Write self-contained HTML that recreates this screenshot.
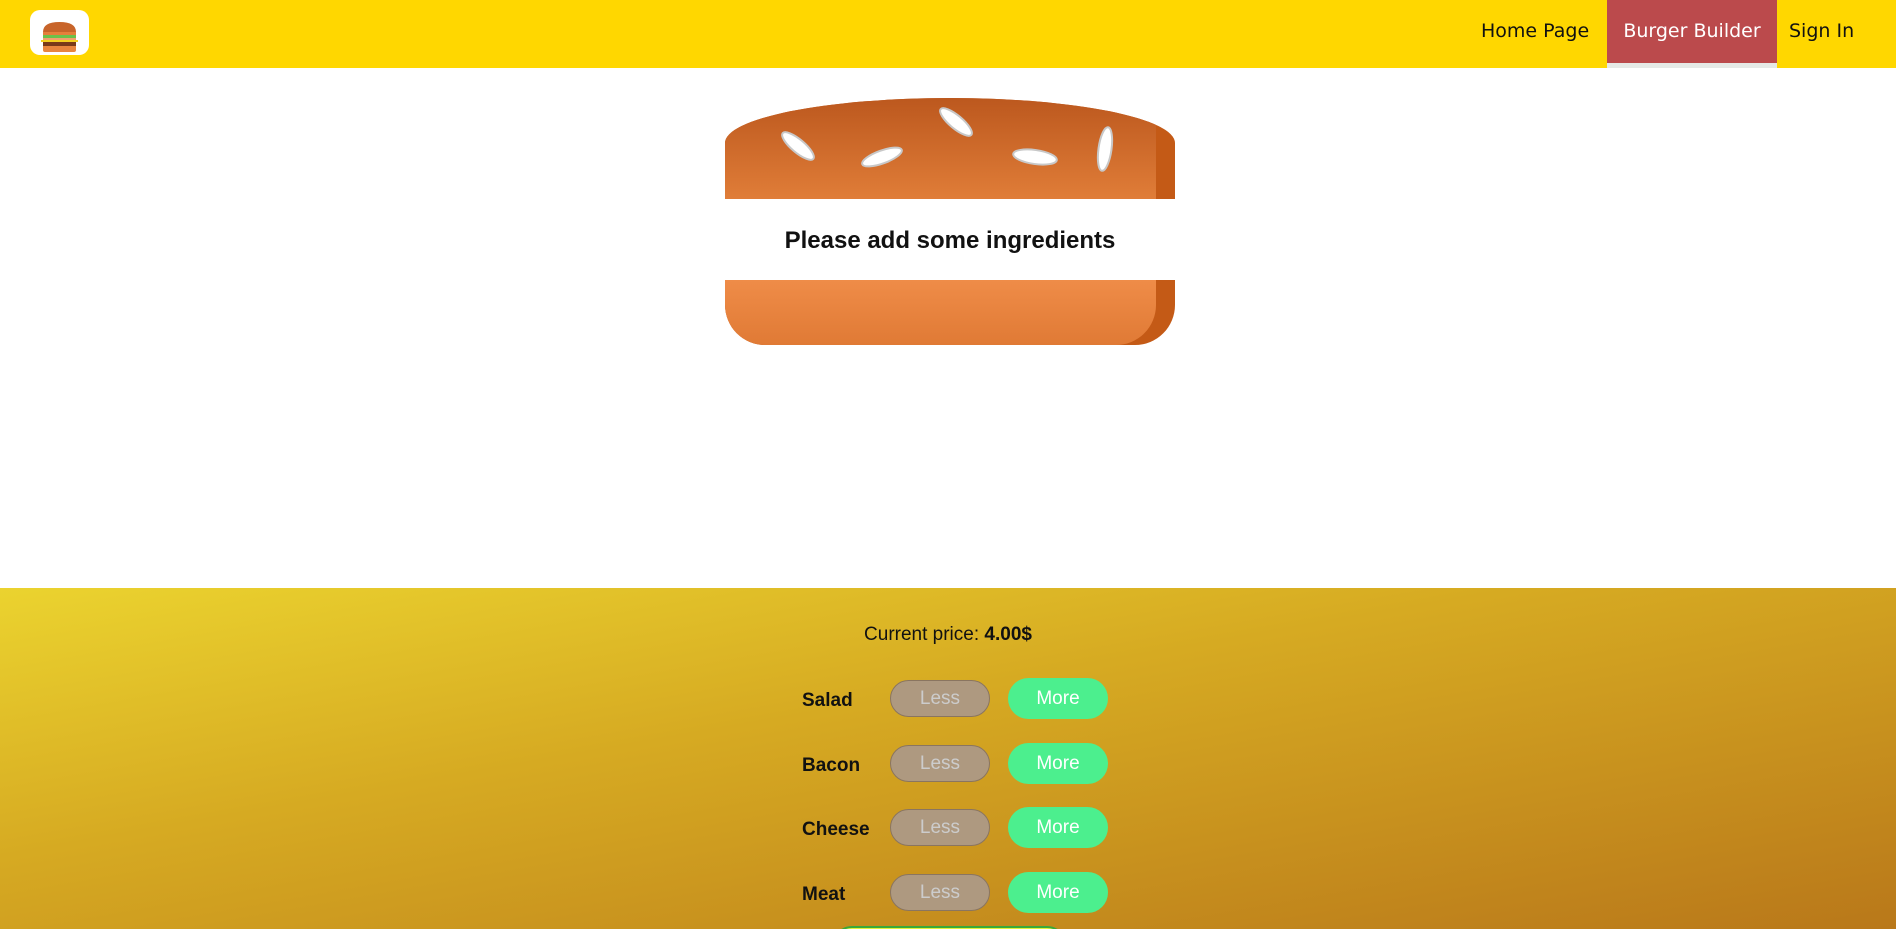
<!DOCTYPE html>
<html><head><meta charset="utf-8">
<style>
*{box-sizing:border-box;margin:0;padding:0}
html{width:1896px;height:929px;overflow:hidden}
body{width:1896px;height:929px;overflow:hidden;background:#fff;font-family:"Liberation Sans",sans-serif;position:relative}
.hdr{position:absolute;left:0;top:0;width:1896px;height:68px;background:#ffd700}
.logo{position:absolute;left:30px;top:10px;width:59px;height:45px;background:#fff;border-radius:10px}
.nav a{position:absolute;top:0;height:63px;line-height:62px;font-family:"DejaVu Sans",sans-serif;font-size:19px;color:#111;text-decoration:none}
.act{background:#bb4a4c;color:#fff!important;border-bottom:5px solid #e6e9e6;height:68px!important;text-align:center}
.bunt{position:absolute;left:725px;top:98px;width:450px;height:101px;background:#c45a16;border-radius:50% 50% 0 0/45px 45px 0 0;overflow:hidden}
.bunb{position:absolute;left:725px;top:280px;width:450px;height:65px;background:#c45a16;border-radius:0 0 40px 40px;overflow:hidden}
.msg{position:absolute;left:725px;top:227px;width:450px;text-align:center;font-weight:bold;font-size:24px;color:#111}
.ctl{position:absolute;left:0;top:588px;width:1896px;height:341px;background:linear-gradient(170deg,#ebd32f 0%,#d6aa22 40%,#b9781a 100%);overflow:hidden}
.price{position:absolute;left:0;width:1896px;top:624px;text-align:center;font-size:19px;color:#111}
.lbl{position:absolute;left:802px;font-weight:bold;font-size:19px;color:#111}
.less{position:absolute;left:890px;width:100px;height:37px;border:1px solid #8a7560;border-radius:19px;background:#ae9980;color:#ccc;font-size:19px;text-align:center;line-height:35px}
.more{position:absolute;left:1008px;width:100px;height:41px;border-radius:21px;background:#4cef8e;color:#fff;font-size:19px;text-align:center;line-height:41px}
.order{position:absolute;left:832px;top:338px;width:235px;height:40px;border:2px solid #3aa83a;border-radius:20px;background:#e0f03a}
</style></head><body>
<div class="hdr">
 <div class="logo">
  <svg width="59" height="45" viewBox="0 0 59 45">
   <path d="M13 22 Q13 12 29.5 12 Q46 12 46 22 Z" fill="#c8642a"/>
   <rect x="13" y="22" width="33" height="3" fill="#e57f3b"/>
   <rect x="13" y="25" width="33" height="3" fill="#6bc14a"/>
   <rect x="13" y="28" width="33" height="2" fill="#f0a070"/>
   <rect x="11" y="30" width="37" height="2" fill="#f5d020"/>
   <rect x="13" y="32" width="33" height="4" fill="#7a3a1a"/>
   <path d="M13 36 H46 V40 Q46 42 44 42 H15 Q13 42 13 40Z" fill="#e8853f"/>
  </svg>
 </div>
 <div class="nav">
  <a style="left:1481px">Home Page</a>
  <a class="act" style="left:1607px;width:170px">Burger Builder</a>
  <a style="left:1789px">Sign In</a>
 </div>
</div>
<div class="bunt">
 <div style="position:absolute;left:0;top:0;width:431px;height:101px;background:linear-gradient(#bc581e,#e07d38)"></div>
 <svg width="450" height="101" style="position:absolute;left:0;top:0">
  <g fill="#fff" stroke="#c8c8c8" stroke-width="2">
   <ellipse cx="73" cy="48" rx="20" ry="6.5" transform="rotate(40 73 48)"/>
   <ellipse cx="157" cy="59" rx="21" ry="6.5" transform="rotate(-20 157 59)"/>
   <ellipse cx="231" cy="24" rx="20" ry="6.5" transform="rotate(40 231 24)"/>
   <ellipse cx="310" cy="59" rx="22" ry="7" transform="rotate(8 310 59)"/>
   <ellipse cx="380" cy="51" rx="22" ry="6.5" transform="rotate(-82 380 51)"/>
  </g>
 </svg>
</div>
<div class="msg">Please add some ingredients</div>
<div class="bunb"><div style="position:absolute;left:0;top:0;width:431px;height:65px;background:linear-gradient(#ef8c48,#e07a35);border-radius:0 0 40px 40px"></div></div>
<div class="ctl"><div class="order"></div></div>
<div class="price">Current price: <b>4.00$</b></div>
<div class="lbl" style="top:690px">Salad</div>
<div class="less" style="top:680px">Less</div><div class="more" style="top:678px">More</div>
<div class="lbl" style="top:755px">Bacon</div>
<div class="less" style="top:745px">Less</div><div class="more" style="top:743px">More</div>
<div class="lbl" style="top:819px">Cheese</div>
<div class="less" style="top:809px">Less</div><div class="more" style="top:807px">More</div>
<div class="lbl" style="top:884px">Meat</div>
<div class="less" style="top:874px">Less</div><div class="more" style="top:872px">More</div>
</body></html>
